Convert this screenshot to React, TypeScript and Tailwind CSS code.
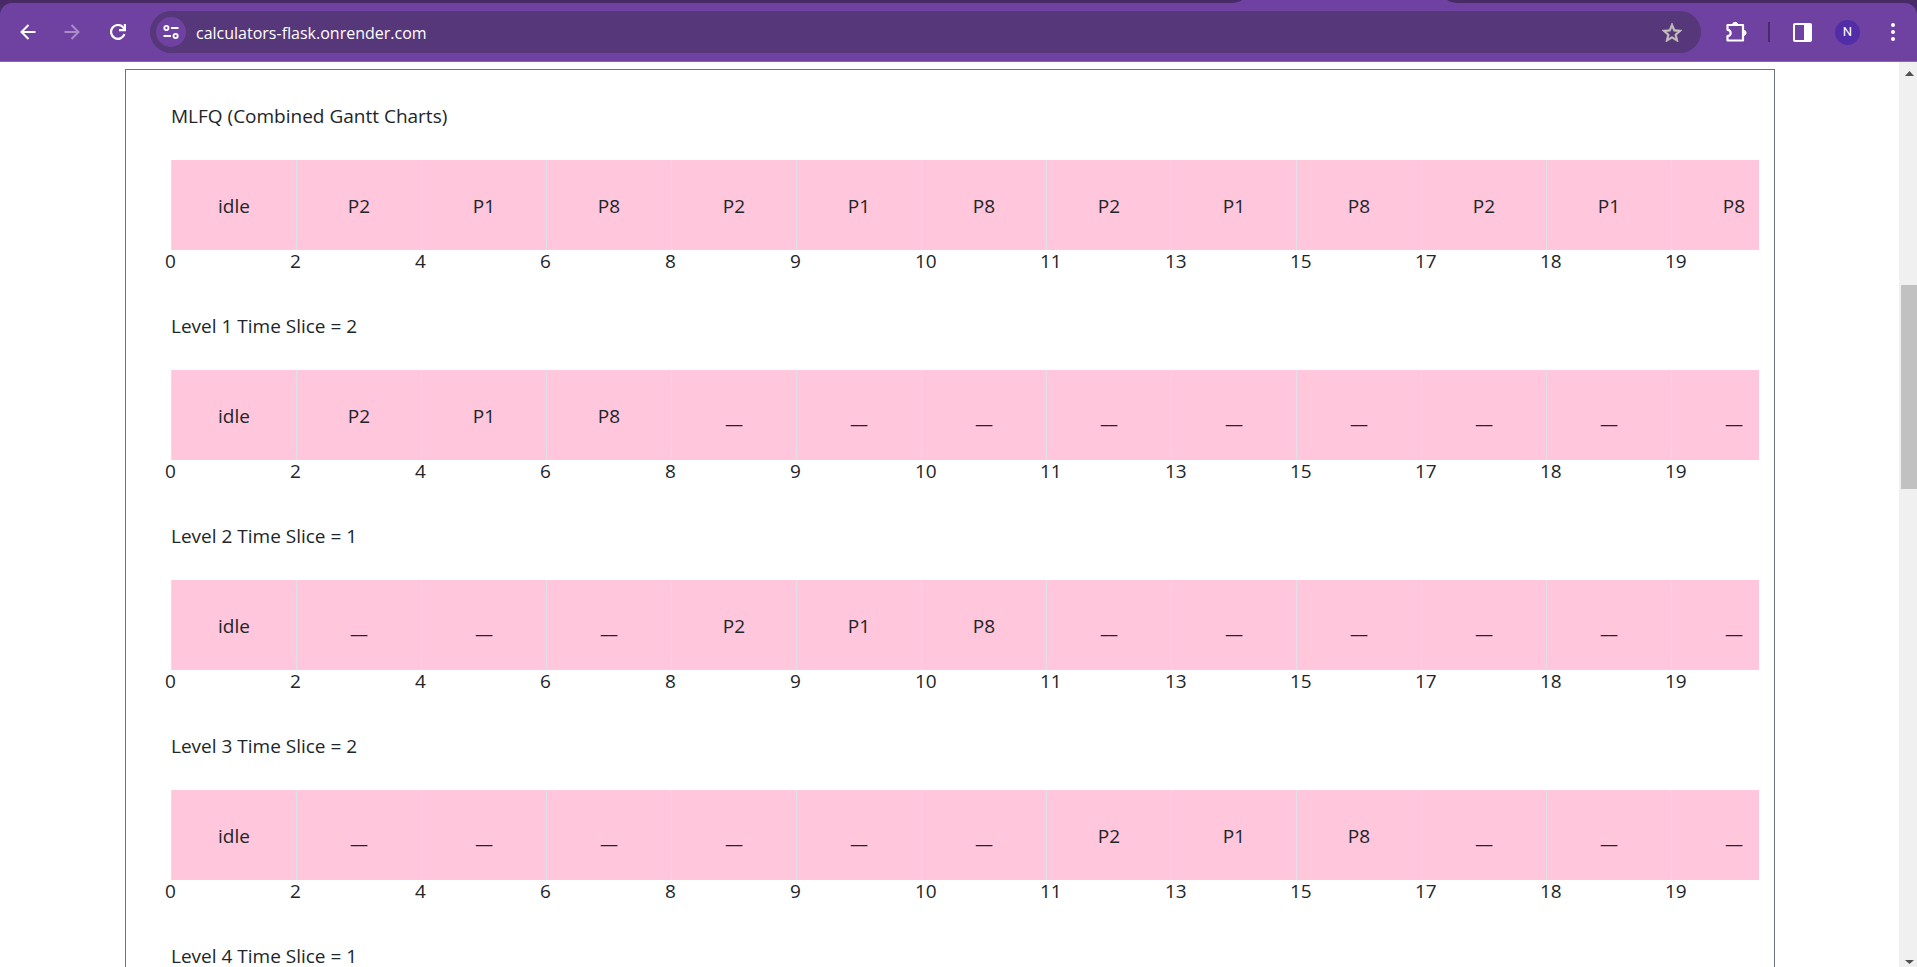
type Chart = { title: string; cells: string[] };

const times = [0, 2, 4, 6, 8, 9, 10, 11, 13, 15, 17, 18, 19];
const order = ["idle", "P2", "P1", "P8", "P2", "P1", "P8", "P2", "P1", "P8", "P2", "P1", "P8"];

const only = (from: number, to: number) =>
  order.map((name, i) => (i === 0 || (i >= from && i <= to) ? name : "__"));

const charts: Chart[] = [
  { title: "MLFQ (Combined Gantt Charts)", cells: order },
  { title: "Level 1 Time Slice = 2", cells: only(1, 3) },
  { title: "Level 2 Time Slice = 1", cells: only(4, 6) },
  { title: "Level 3 Time Slice = 2", cells: only(7, 9) },
];

function BackIcon() {
  return (
    <svg viewBox="0 0 16 16" className="size-4" fill="none" stroke="currentColor" strokeWidth="2">
      <path d="M15.5 8H2M8.5 1L1.5 8l7 7" />
    </svg>
  );
}

function ForwardIcon() {
  return (
    <svg viewBox="0 0 16 16" className="size-4" fill="none" stroke="currentColor" strokeWidth="2">
      <path d="M.5 8H14M7.5 1l7 7-7 7" />
    </svg>
  );
}

function ReloadIcon() {
  return (
    <svg viewBox="0 0 16 16" className="size-4" fill="none" stroke="currentColor" strokeWidth="2.2">
      <path d="M14.5 10.2A6.9 6.9 0 1 1 13.2 3.4L14.8 5.6" />
      <path d="M14.9 0v6.1H9" />
    </svg>
  );
}

function TuneIcon() {
  return (
    <svg viewBox="0 0 16 16" className="size-4" fill="none" stroke="currentColor" strokeWidth="1.9">
      <circle cx="3.4" cy="4" r="2.1" />
      <circle cx="12.6" cy="12" r="2.1" />
      <path d="M8 4h7.5M.5 12H8" />
    </svg>
  );
}

function StarIcon() {
  return (
    <svg viewBox="2 2 20 19" className="h-[19px] w-5" fill="currentColor" stroke="currentColor" strokeWidth=".6">
      <path d="M22 9.24l-7.19-.62L12 2 9.19 8.63 2 9.24l5.46 4.73L5.82 21 12 17.27 18.18 21l-1.63-7.03L22 9.24zM12 15.4l-3.76 2.27 1-4.28-3.32-2.88 4.38-.38L12 6.1l1.71 4.04 4.38.38-3.32 2.88 1 4.28L12 15.4z" />
    </svg>
  );
}

function PuzzleIcon() {
  return (
    <svg viewBox="0 0 22 22" className="size-[22px]" fill="none" stroke="currentColor" strokeWidth="2.2" strokeLinejoin="round">
      <path d="M2.5 4h15.5v15.5H2.5v-4.3a3 3 0 0 0 0-6.4z" />
      <path d="M7.5 4a2.7 2.7 0 0 1 5.4 0zM18.5 9.2a2.6 2.6 0 0 1 0 5.2z" fill="currentColor" strokeWidth="1" />
    </svg>
  );
}

function PanelIcon() {
  return (
    <svg viewBox="0 0 19 19" className="size-[19px]">
      <rect x="1" y="1" width="17" height="17" rx="1" fill="none" stroke="currentColor" strokeWidth="2" />
      <path d="M11 1h7v17h-7z" fill="currentColor" />
    </svg>
  );
}

function Toolbar() {
  return (
    <header className="shrink-0 bg-[#472a66] text-white">
      <div className="flex h-[3px]">
        <div className="w-[1230px] shrink" />
        <svg viewBox="0 0 229 3" className="h-[3px] w-[229px] shrink-0 text-[#6f42a1]" fill="currentColor">
          <path d="M0 3Q9 2.500 12 0H217Q220 2.500 229 3z" />
        </svg>
      </div>
      <div className="flex h-[59px] items-center rounded-t-xl border-b border-[#8a66b4] bg-[#6f42a1] pr-[22px] pl-5">
        <button aria-label="Back"><BackIcon /></button>
        <button aria-label="Forward" className="ml-7 text-[#a98cc8]" disabled><ForwardIcon /></button>
        <button aria-label="Reload" className="ml-[30px]"><ReloadIcon /></button>
        <div className="ml-6 flex h-[42px] min-w-0 flex-1 items-center rounded-full bg-[#56377a] pr-[19px] pl-[6px]">
          <button aria-label="View site information" className="flex size-[30px] shrink-0 items-center justify-center rounded-full bg-[#6f42a1]">
            <TuneIcon />
          </button>
          <input
            aria-label="Address"
            defaultValue="calculators-flask.onrender.com"
            className="ml-[10px] min-w-0 flex-1 bg-transparent pt-[2px] font-['Open_Sans','Noto_Sans',sans-serif] text-[16px] outline-none"
          />
          <button aria-label="Bookmark this tab" className="text-[#c4c0bd]"><StarIcon /></button>
        </div>
        <button aria-label="Extensions" className="ml-6"><PuzzleIcon /></button>
        <div className="ml-[21px] h-5 w-[2px] bg-[#472a66]" />
        <button aria-label="Side panel" className="ml-[23px]"><PanelIcon /></button>
        <button aria-label="Profile" className="ml-[23px] flex size-[25px] items-center justify-center rounded-full bg-[#512da8] font-['Roboto',sans-serif] text-[13px]">
          N
        </button>
        <button aria-label="Menu" className="ml-[31px] flex flex-col gap-[3px]">
          <span className="size-1 rounded-full bg-white" />
          <span className="size-1 rounded-full bg-white" />
          <span className="size-1 rounded-full bg-white" />
        </button>
      </div>
    </header>
  );
}

function GanttChart({ title, cells }: Chart) {
  return (
    <section className="pb-7">
      <h2 className="pb-7">{title}</h2>
      <div className="flex h-[90px] overflow-hidden bg-[#ffc6dc]">
        {cells.map((cell, i) => (
          <div key={i} className="flex w-[125px] shrink-0 items-center justify-center border-l border-[#dee2e6] pt-[2px]">
            {cell}
          </div>
        ))}
      </div>
      <div className="-ml-[6px] flex h-8 items-start leading-[22px]">
        {times.map((time) => (
          <span key={time} className="w-[125px] shrink-0">{time}</span>
        ))}
      </div>
    </section>
  );
}

function Scrollbar() {
  return (
    <div className="flex w-[18px] shrink-0 flex-col items-center bg-[#f0f0f0] pt-[9px] pb-[3px] text-[#505050]" aria-hidden="true">
      <svg viewBox="0 0 9 5" className="ml-[3px] h-[5px] w-[9px]" fill="currentColor"><path d="M4.5 0L9 5H0z" /></svg>
      <div className="flex w-full flex-1 flex-col pl-[2px]">
        <div className="flex-[209]" />
        <div className="flex-[204] bg-[#c1c1c1]" />
        <div className="flex-[471]" />
      </div>
      <svg viewBox="0 0 9 4" className="ml-[3px] h-1 w-[9px]" fill="currentColor"><path d="M4.5 4L9 0H0z" /></svg>
    </div>
  );
}

export default function App() {
  return (
    <div className="flex h-screen flex-col overflow-hidden bg-white">
      <Toolbar />
      <div className="flex min-h-0 flex-1">
        <main className="flex min-w-0 flex-1 flex-col overflow-hidden pt-[7px] pr-[124px] pl-[125px] font-['Open_Sans','Noto_Sans',sans-serif] text-[19px] leading-8 text-[#212529]">
          <div className="flex-1 border border-b-0 border-[#6c757d] pt-[30px] pr-[15px] pl-[45px]">
            {charts.map((chart) => (
              <GanttChart key={chart.title} {...chart} />
            ))}
            <h2>Level 4 Time Slice = 1</h2>
          </div>
        </main>
        <Scrollbar />
      </div>
    </div>
  );
}
